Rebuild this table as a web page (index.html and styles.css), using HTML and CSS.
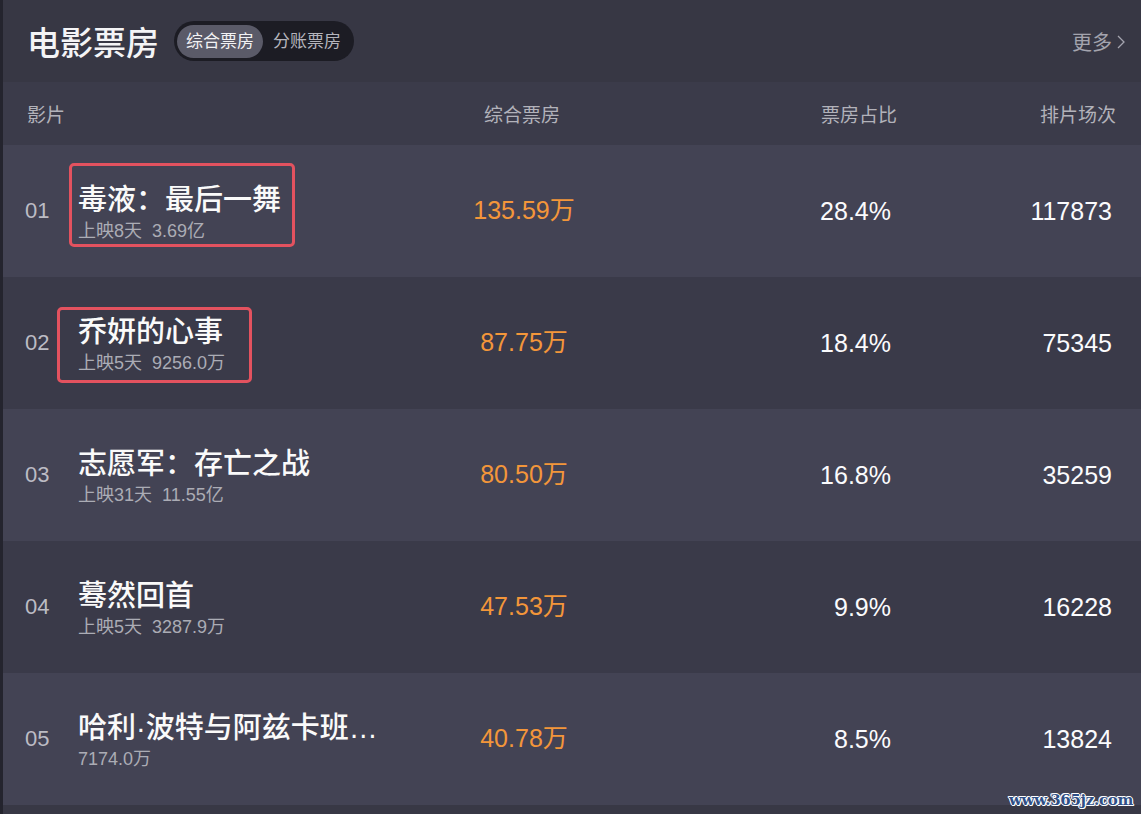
FILE: index.html
```html
<!DOCTYPE html>
<html lang="zh-CN">
<head>
    <meta charset="UTF-8">
    <meta name="viewport" content="width=device-width, initial-scale=1.0">
    <title>电影票房</title>
    <link rel="stylesheet" href="styles.css">
</head>
<body>

    <div class="board">
        <div class="top">
            <div class="top-left">
                <h1>电影票房</h1>
                <div class="switch">
                    <span class="switch-item active">综合票房</span>
                    <span class="switch-item">分账票房</span>
                </div>
            </div>
            <a class="more" href="#">更多<svg width="10" height="16" viewBox="0 0 10 16"><path d="M2 2 L8 8 L2 14" fill="none" stroke="currentColor" stroke-width="1.3"/></svg></a>
        </div>

        <div class="grid head">
            <div class="c-film">影片</div>
            <div class="c-box">综合票房</div>
            <div class="c-rate">票房占比</div>
            <div class="c-show">排片场次</div>
        </div>

        <div class="grid row odd">
            <div class="c-num">01</div>
            <div class="c-name">
                <div class="name-block">
                    <div class="title">毒液：最后一舞</div>
                    <div class="sub">上映8天&nbsp; 3.69亿</div>
                    <span class="mark mark-1"></span>
                </div>
            </div>
            <div class="c-box money">135.59万</div>
            <div class="c-rate">28.4%</div>
            <div class="c-show">117873</div>
        </div>

        <div class="grid row even">
            <div class="c-num">02</div>
            <div class="c-name">
                <div class="name-block">
                    <div class="title">乔妍的心事</div>
                    <div class="sub">上映5天&nbsp; 9256.0万</div>
                    <span class="mark mark-2"></span>
                </div>
            </div>
            <div class="c-box money">87.75万</div>
            <div class="c-rate">18.4%</div>
            <div class="c-show">75345</div>
        </div>

        <div class="grid row odd">
            <div class="c-num">03</div>
            <div class="c-name">
                <div class="name-block">
                    <div class="title">志愿军：存亡之战</div>
                    <div class="sub">上映31天&nbsp; 11.55亿</div>
                </div>
            </div>
            <div class="c-box money">80.50万</div>
            <div class="c-rate">16.8%</div>
            <div class="c-show">35259</div>
        </div>

        <div class="grid row even">
            <div class="c-num">04</div>
            <div class="c-name">
                <div class="name-block">
                    <div class="title">蓦然回首</div>
                    <div class="sub">上映5天&nbsp; 3287.9万</div>
                </div>
            </div>
            <div class="c-box money">47.53万</div>
            <div class="c-rate">9.9%</div>
            <div class="c-show">16228</div>
        </div>

        <div class="grid row odd">
            <div class="c-num">05</div>
            <div class="c-name">
                <div class="name-block">
                    <div class="title">哈利·波特与阿兹卡班…</div>
                    <div class="sub">7174.0万</div>
                </div>
            </div>
            <div class="c-box money">40.78万</div>
            <div class="c-rate">8.5%</div>
            <div class="c-show">13824</div>
        </div>

        <div class="bottom"></div>
        <div class="watermark">www.365jz.com</div>
    </div>

</body>
</html>
```

FILE: styles.css
```css
body { margin: 0; background-color: #383845; font-family: "Liberation Sans", "Noto Sans CJK SC", sans-serif; color: #fff; }
.board { position: relative; width: 1141px; height: 814px; overflow: hidden; border-left: 3px solid #24242e; box-sizing: border-box; background-color: #373744; }

.top { height: 82px; display: flex; align-items: center; justify-content: space-between; padding: 0 15px 0 24px; box-sizing: border-box; }
.top-left { display: flex; align-items: center; gap: 15px; }
h1 { margin: 0; font-size: 33px; font-weight: 500; letter-spacing: 0; color: #f4f4f6; }
.switch { display: flex; align-items: center; height: 40px; padding: 0 3px; background-color: #1c1c24; border-radius: 20px; box-sizing: border-box; }
.switch-item { font-size: 17px; color: #b4b4bc; height: 33px; line-height: 33px; padding: 0 10px; border-radius: 17px; }
.switch-item.active { background-color: #5a5a68; color: #f2f2f4; padding: 0 9px; }
.more { display: flex; align-items: center; gap: 4px; color: #a4a4ae; font-size: 20px; text-decoration: none; }
.more svg { margin-top: 1px; }

.grid { display: grid; grid-template-columns: 53px 336px 220px 257px 221px; padding: 0 29px 0 22px; align-items: center; }
.head { height: 63px; background-color: #3b3b4a; font-size: 19px; color: #b2b2ba; }
.head .c-film { grid-column: 1 / span 2; padding-left: 2px; }
.head .c-box { text-align: center; margin-left: -4px; }
.head .c-rate { text-align: right; margin-right: -6px; }
.head .c-show { text-align: right; margin-right: -4px; }

.row { height: 132px; }
.row.odd { background-color: #434354; }
.row.even { background-color: #3a3a49; }
.c-num { font-size: 22px; color: #bcbcc4; }
.name-block { position: relative; }
.title { font-size: 29px; line-height: 38px; font-weight: 500; color: #fafafa; white-space: nowrap; }
.sub { font-size: 18px; line-height: 22px; color: #abacb5; margin-top: 1px; }
.c-box { text-align: center; }
.money { font-size: 25px; line-height: 28px; color: #f3963a; margin-top: -2px; }
.row .c-rate, .row .c-show { text-align: right; font-size: 25px; color: #fbfbfd; }

.mark { position: absolute; border: 3px solid #e3525f; border-radius: 5px; box-sizing: border-box; }
.mark-1 { left: -9px; top: -18px; width: 226px; height: 84px; }
.mark-2 { left: -21px; top: -6px; width: 195px; height: 76px; }

.bottom { height: 9px; background-color: #383845; }
.watermark { position: absolute; right: 8px; bottom: 5px; font-family: "DejaVu Serif", serif; font-weight: bold; font-size: 15px; color: #2f4f86; text-shadow: 1px 0 #fff, -1px 0 #fff, 0 1px #fff, 0 -1px #fff, 1px 1px #e8eef8, -1px -1px #e8eef8; letter-spacing: -0.3px; }
```
